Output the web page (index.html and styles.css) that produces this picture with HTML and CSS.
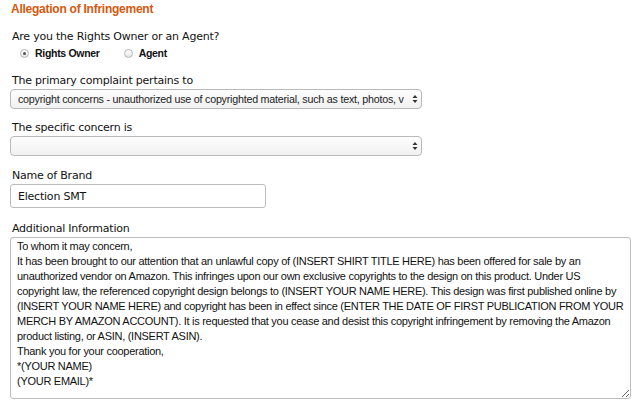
FILE: index.html
```html
<!DOCTYPE html>
<html>
<head>
<meta charset="utf-8">
<link rel="stylesheet" href="styles.css">
</head>
<body>
<form class="form">
  <div class="title">Allegation of Infringement</div>
  <div class="question">Are you the Rights Owner or an Agent?</div>
  <div class="radios">
    <label class="radio"><span class="dot checked"></span>Rights Owner</label>
    <label class="radio"><span class="dot"></span>Agent</label>
  </div>
  <div class="group g1">
    <div class="label">The primary complaint pertains to</div>
    <div class="select wide"><span class="sel-text">copyright concerns - unauthorized use of copyrighted material, such as text, photos, v</span><span class="arrows"><svg width="6" height="10" viewBox="0 0 6 10"><path d="M3 1 L5.5 4 H0.5 Z M3 9 L5.5 6 H0.5 Z" fill="#333"/></svg></span></div>
  </div>
  <div class="group g2">
    <div class="label">The specific concern is</div>
    <div class="select wide"><span class="sel-text"></span><span class="arrows"><svg width="6" height="10" viewBox="0 0 6 10"><path d="M3 1 L5.5 4 H0.5 Z M3 9 L5.5 6 H0.5 Z" fill="#333"/></svg></span></div>
  </div>
  <div class="group g3">
    <div class="label">Name of Brand</div>
    <input class="input" type="text" value="Election SMT">
  </div>
  <div class="group g4">
    <div class="label">Additional Information</div>
    <textarea class="textarea" wrap="off">To whom it may concern,
It has been brought to our attention that an unlawful copy of (INSERT SHIRT TITLE HERE) has been offered for sale by an
unauthorized vendor on Amazon. This infringes upon our own exclusive copyrights to the design on this product. Under US
copyright law, the referenced copyright design belongs to (INSERT YOUR NAME HERE). This design was first published online by
(INSERT YOUR NAME HERE) and copyright has been in effect since (ENTER THE DATE OF FIRST PUBLICATION FROM YOUR
MERCH BY AMAZON ACCOUNT). It is requested that you cease and desist this copyright infringement by removing the Amazon
product listing, or ASIN, (INSERT ASIN).
Thank you for your cooperation,
*(YOUR NAME)
(YOUR EMAIL)*</textarea>
  </div>
</form>
</body>
</html>
```
FILE: styles.css
```css
html, body { margin: 0; padding: 0; background: #fff; }
body { width: 640px; height: 400px; overflow: hidden; }
.form {
  padding: 1px 9px 0 10px;
  display: flex;
  flex-direction: column;
  color: #111;
  font-family: "DejaVu Sans", Verdana, sans-serif;
}
.title {
  font-family: "Liberation Sans", Arial, sans-serif;
  font-weight: bold;
  font-size: 12px;
  letter-spacing: -0.25px;
  line-height: 16px;
  color: #d2590e;
  padding-left: 1px;
}
.question {
  margin-top: 12px;
  font-size: 11px;
  letter-spacing: -0.22px;
  line-height: 16px;
  padding-left: 2px;
}
.radios {
  display: flex;
  gap: 24px;
  padding-left: 10px;
  line-height: 16px;
}
.radio {
  display: flex;
  align-items: center;
  gap: 6px;
  font-family: "Liberation Sans", Arial, sans-serif;
  font-weight: bold;
  font-size: 10.5px;
  letter-spacing: -0.3px;
}
.dot {
  width: 9px; height: 9px;
  border-radius: 50%;
  border: 1px solid #b5b5b5;
  background: linear-gradient(#fff, #e6e6e6);
  position: relative;
  box-sizing: border-box;
}
.dot.checked::after {
  content: "";
  position: absolute;
  left: 2px; top: 2px;
  width: 3px; height: 3px;
  border-radius: 50%;
  background: #555;
}
.group { display: flex; flex-direction: column; }
.g1 { margin-top: 11px; }
.g2 { margin-top: 10px; }
.g3 { margin-top: 11px; }
.g4 { margin-top: 12px; }
.label {
  font-size: 11px;
  letter-spacing: -0.22px;
  line-height: 14px;
  padding: 2px 0 0 2px;
}
.select {
  margin-top: 1px;
  box-sizing: border-box;
  width: 412px;
  height: 20px;
  border: 1px solid #b9b9b9;
  border-radius: 4px;
  background: linear-gradient(#fdfdfd, #f1f1f1);
  display: flex;
  align-items: center;
  justify-content: space-between;
  padding: 0 3px 0 7px;
  font-family: "Liberation Sans", Arial, sans-serif;
  font-size: 10.7px;
  color: #222;
}
.sel-text { white-space: nowrap; overflow: hidden; letter-spacing: -0.22px; }
.arrows { display: flex; }
.input {
  margin: 1px 0 0 0;
  box-sizing: border-box;
  width: 256px;
  height: 24px;
  border: 1px solid #bdbdbd;
  border-radius: 3px;
  padding: 0 7px;
  font-family: "DejaVu Sans", Verdana, sans-serif;
  font-size: 11px;
  letter-spacing: -0.22px;
  color: #111;
  background: #fff;
}
.textarea {
  margin: 1px 0 0 0;
  box-sizing: border-box;
  width: 621px;
  height: 162px;
  border: 1px solid #bdbdbd;
  border-radius: 3px;
  padding: 1px 6px;
  font-family: "Liberation Sans", Arial, sans-serif;
  font-size: 11px;
  line-height: 15px;
  letter-spacing: -0.28px;
  color: #111;
  resize: both;
  overflow: hidden;
  white-space: pre;
  background: #fff;
}
```
